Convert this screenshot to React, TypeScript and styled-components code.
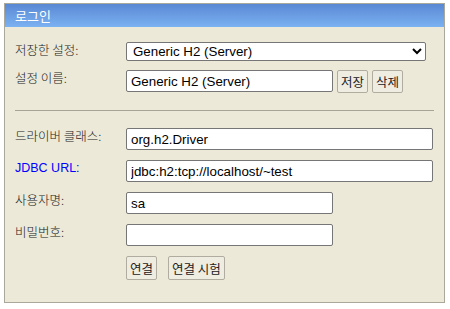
import React from 'react';
import styled, { createGlobalStyle } from 'styled-components';

const GlobalStyle = createGlobalStyle`
  body {
    margin: 0;
    padding: 3px 4px;
    background: #fff;
    font-family: "Noto Sans CJK KR", "Liberation Sans", sans-serif;
  }
`;

const Panel = styled.div`
  width: 439px;
  border: 1px solid #aaa89a;
  background: #ece9d8;
`;

const Header = styled.div`
  height: 23px;
  padding-left: 10px;
  display: flex;
  align-items: center;
  background: linear-gradient(to bottom, #5a88d4, #7bb2f2);
  color: #fff;
  font-size: 13px;
`;

const Body = styled.div`
  padding: 15px 10px 22px 10px;
  display: flex;
  flex-direction: column;
`;

const Row = styled.div<{ $top?: number }>`
  display: grid;
  grid-template-columns: 111px auto;
  align-items: start;
  margin-top: ${p => p.$top ?? 0}px;
`;

const Label = styled.label<{ $link?: boolean }>`
  font-size: 12.5px;
  line-height: 16px;
  color: ${p => (p.$link ? '#0000ff' : '#222')};
  font-family: ${p =>
    p.$link ? '"Liberation Sans", sans-serif' : '"Noto Sans CJK KR", sans-serif'};
  font-weight: 300;
`;

const Field = styled.div`
  display: flex;
  align-items: flex-start;
  gap: 4px;
`;

const Select = styled.select`
  width: 300px;
  height: 19px;
  box-sizing: border-box;
  border: 1px solid #767676;
  border-radius: 2px;
  background: #fff;
  font-family: "Liberation Sans", sans-serif;
  font-size: 13.33px;
  color: #000;
  padding: 0 2px;
`;

const TextInput = styled.input<{ $wide?: boolean }>`
  width: ${p => (p.$wide ? 307 : 207)}px;
  height: 22px;
  box-sizing: border-box;
  border: 1px solid #767676;
  border-radius: 2px;
  background: #fff;
  font-family: "Liberation Sans", sans-serif;
  font-size: 13.33px;
  color: #000;
  padding: 1px 4px 0;
  outline: none;
`;

const Button = styled.button`
  height: 23px;
  box-sizing: border-box;
  padding: 0 3px;
  border: 1px solid #b0ada0;
  border-radius: 2px;
  background: #efece2;
  font-family: "Noto Sans CJK KR", sans-serif;
  font-size: 12.5px;
  color: #222;
  cursor: pointer;
`;

const ActionButton = styled(Button)`
  height: 24px;
`;

const Separator = styled.hr`
  margin: 17px 0 0 0;
  border: none;
  border-top: 1px solid #a6a497;
  height: 0;
`;

const Actions = styled.div`
  display: flex;
  gap: 11px;
`;

export default function App() {
  return (
    <>
      <GlobalStyle />
      <Panel>
        <Header>로그인</Header>
        <Body>
          <Row>
            <Label>저장한 설정:</Label>
            <Field>
              <Select defaultValue="Generic H2 (Server)">
                <option>Generic H2 (Server)</option>
              </Select>
            </Field>
          </Row>
          <Row $top={9}>
            <Label>설정 이름:</Label>
            <Field>
              <TextInput defaultValue="Generic H2 (Server)" />
              <Button>저장</Button>
              <Button>삭제</Button>
            </Field>
          </Row>
          <Separator />
          <Row $top={17}>
            <Label>드라이버 클래스:</Label>
            <Field>
              <TextInput $wide defaultValue="org.h2.Driver" />
            </Field>
          </Row>
          <Row $top={10}>
            <Label $link>JDBC URL:</Label>
            <Field>
              <TextInput $wide defaultValue="jdbc:h2:tcp://localhost/~test" />
            </Field>
          </Row>
          <Row $top={10}>
            <Label>사용자명:</Label>
            <Field>
              <TextInput defaultValue="sa" />
            </Field>
          </Row>
          <Row $top={10}>
            <Label>비밀번호:</Label>
            <Field>
              <TextInput type="password" />
            </Field>
          </Row>
          <Row $top={10}>
            <span />
            <Actions>
              <ActionButton>연결</ActionButton>
              <ActionButton>연결 시험</ActionButton>
            </Actions>
          </Row>
        </Body>
      </Panel>
    </>
  );
}
